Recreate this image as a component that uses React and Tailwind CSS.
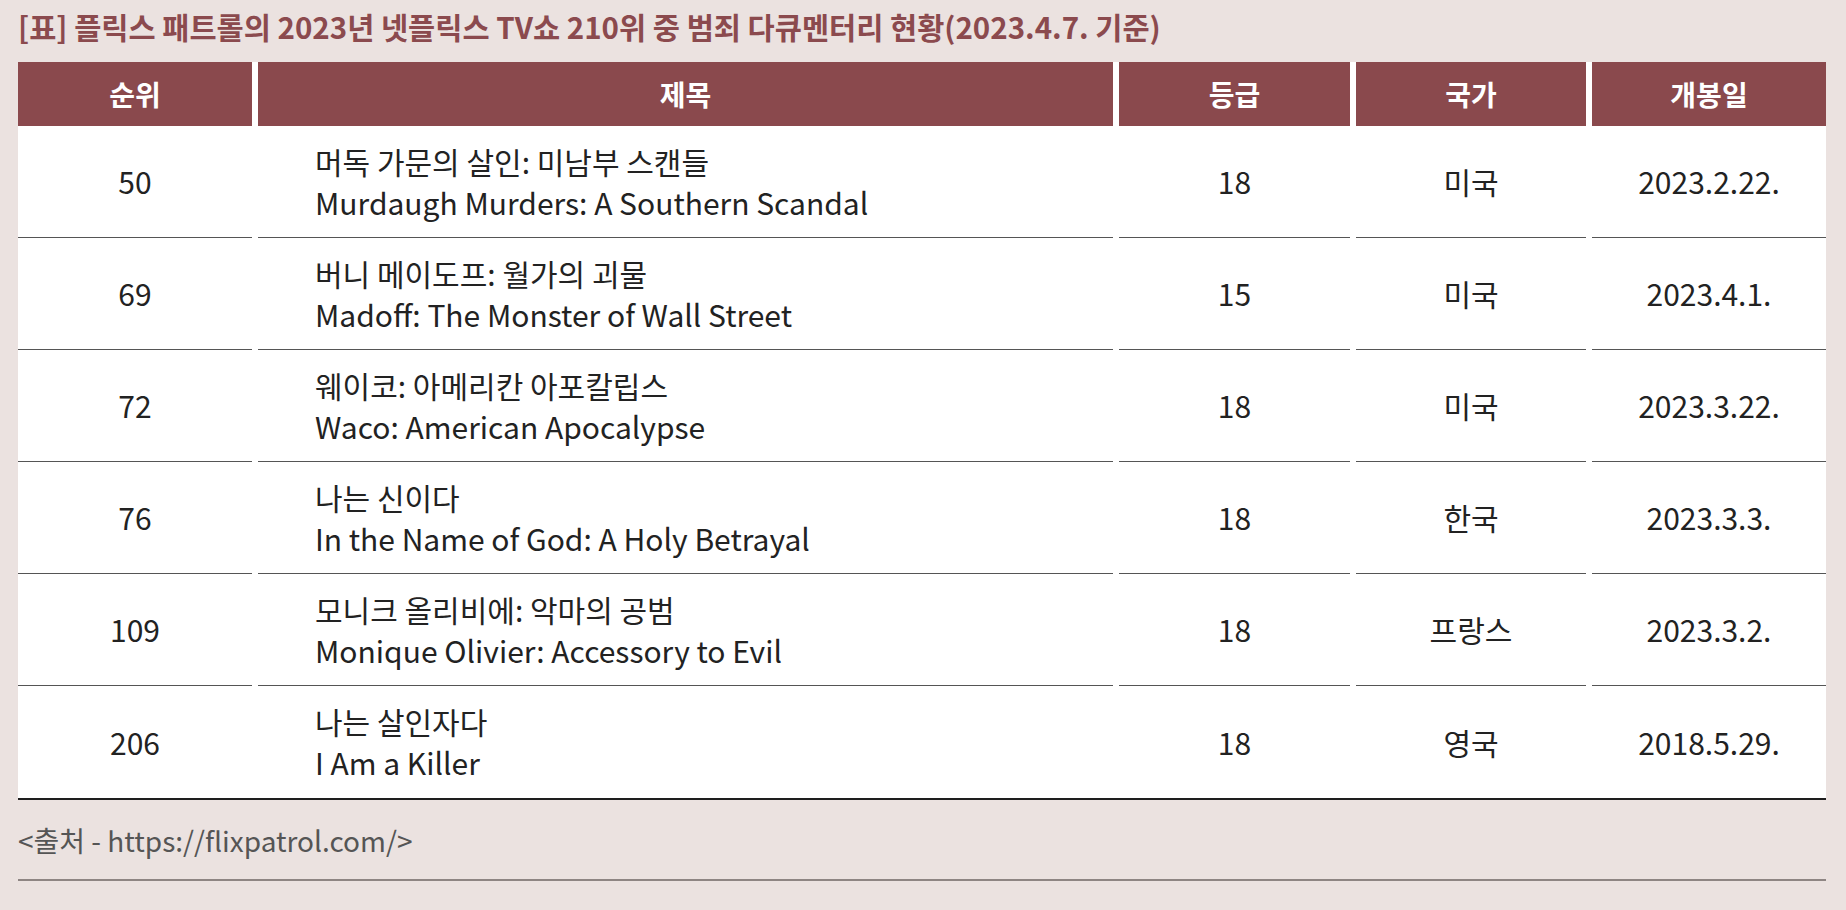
const rows = [
  { rank: "50", ko: "머독 가문의 살인: 미남부 스캔들", en: "Murdaugh Murders: A Southern Scandal", grade: "18", country: "미국", date: "2023.2.22." },
  { rank: "69", ko: "버니 메이도프: 월가의 괴물", en: "Madoff: The Monster of Wall Street", grade: "15", country: "미국", date: "2023.4.1." },
  { rank: "72", ko: "웨이코: 아메리칸 아포칼립스", en: "Waco: American Apocalypse", grade: "18", country: "미국", date: "2023.3.22." },
  { rank: "76", ko: "나는 신이다", en: "In the Name of God: A Holy Betrayal", grade: "18", country: "한국", date: "2023.3.3." },
  { rank: "109", ko: "모니크 올리비에: 악마의 공범", en: "Monique Olivier: Accessory to Evil", grade: "18", country: "프랑스", date: "2023.3.2." },
  { rank: "206", ko: "나는 살인자다", en: "I Am a Killer", grade: "18", country: "영국", date: "2018.5.29." },
];

const headers = ["순위", "제목", "등급", "국가", "개봉일"];

export default function App() {
  return (
    <div className="min-h-screen bg-[#ebe2e0] pl-[18px] pr-[20px] pt-[8px] font-['Noto_Sans_CJK_KR',sans-serif] text-[#222]">
      {/* 제목 */}
      <h1 className="h-[36px] leading-[36px] text-[29.5px] font-bold text-[#8b4a4e]">
        [표] 플릭스 패트롤의 2023년 넷플릭스 TV쇼 210위 중 범죄 다큐멘터리 현황(2023.4.7. 기준)
      </h1>

      {/* 표 */}
      <div className="mt-[18px] grid grid-cols-[234px_855px_231px_230px_234px] gap-x-[6px] bg-white border-b-2 border-[#1e1e1e]">
        {headers.map((h) => (
          <div key={h} className="h-[64px] bg-[#8a494d] flex items-center justify-center text-white text-[28px] font-bold">
            {h}
          </div>
        ))}

        {rows.map((r, i) => {
          const line = i < rows.length - 1 ? "border-b border-[#555]" : "";
          return [
            <div key={r.rank + "a"} className={`h-[112px] flex items-center justify-center text-[30px] ${line}`}>
              {r.rank}
            </div>,
            <div key={r.rank + "b"} className={`h-[112px] flex flex-col justify-center pl-[57px] text-[30px] leading-[41px] ${line}`}>
              <span>{r.ko}</span>
              <span>{r.en}</span>
            </div>,
            <div key={r.rank + "c"} className={`h-[112px] flex items-center justify-center text-[30px] ${line}`}>
              {r.grade}
            </div>,
            <div key={r.rank + "d"} className={`h-[112px] flex items-center justify-center text-[30px] ${line}`}>
              {r.country}
            </div>,
            <div key={r.rank + "e"} className={`h-[112px] flex items-center justify-center text-[30px] ${line}`}>
              {r.date}
            </div>,
          ];
        })}
      </div>

      {/* 출처 */}
      <div className="h-[81px] flex items-center border-b-2 border-[#8e8583] text-[28px] text-[#555]">
        &lt;출처 - https://flixpatrol.com/&gt;
      </div>
    </div>
  );
}
